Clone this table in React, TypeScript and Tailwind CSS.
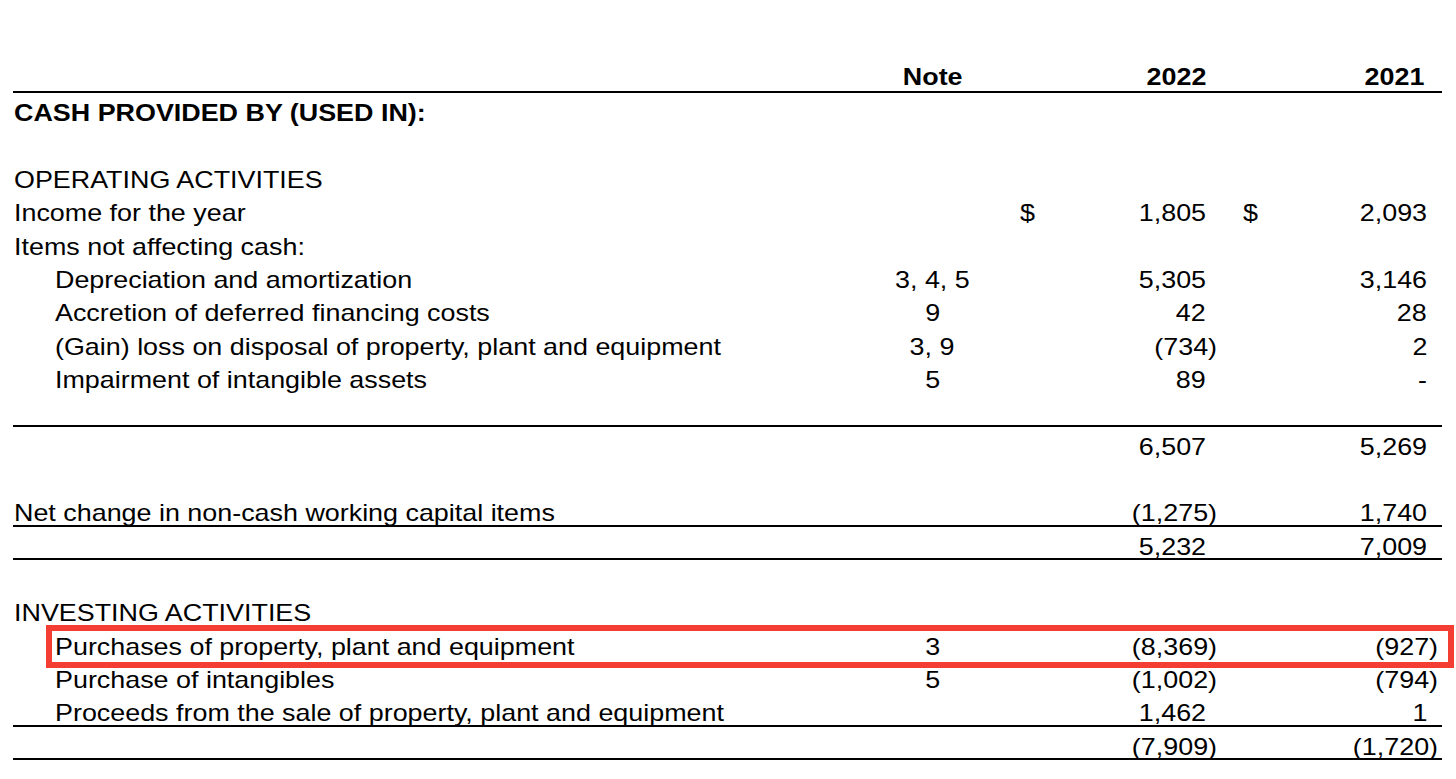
import React from 'react';

// Row model for the cash flow statement
type Row = {
    label?: string;
    indent?: boolean;
    bold?: boolean;
    note?: string;
    dollar?: boolean;
    v2022?: string;
    v2021?: string;
    line?: boolean; // rule under the row
    highlight?: boolean;
};

const rows: Row[] = [
    { label: 'CASH PROVIDED BY (USED IN):', bold: true },
    {},
    { label: 'OPERATING ACTIVITIES' },
    { label: 'Income for the year', dollar: true, v2022: '1,805', v2021: '2,093' },
    { label: 'Items not affecting cash:' },
    { label: 'Depreciation and amortization', indent: true, note: '3, 4, 5', v2022: '5,305', v2021: '3,146' },
    { label: 'Accretion of deferred financing costs', indent: true, note: '9', v2022: '42', v2021: '28' },
    { label: '(Gain) loss on disposal of property, plant and equipment', indent: true, note: '3, 9', v2022: '(734)', v2021: '2' },
    { label: 'Impairment of intangible assets', indent: true, note: '5', v2022: '89', v2021: '-' },
    { line: true },
    { v2022: '6,507', v2021: '5,269' },
    {},
    { label: 'Net change in non-cash working capital items', v2022: '(1,275)', v2021: '1,740', line: true },
    { v2022: '5,232', v2021: '7,009', line: true },
    {},
    { label: 'INVESTING ACTIVITIES' },
    { label: 'Purchases of property, plant and equipment', indent: true, note: '3', v2022: '(8,369)', v2021: '(927)', highlight: true },
    { label: 'Purchase of intangibles', indent: true, note: '5', v2022: '(1,002)', v2021: '(794)' },
    { label: 'Proceeds from the sale of property, plant and equipment', indent: true, v2022: '1,462', v2021: '1', line: true },
    { v2022: '(7,909)', v2021: '(1,720)', line: true },
];

const cols = 'grid grid-cols-[867px_105px_75px_157px_73px_148px_4px]';

// the scanned statement is a little wider than plain Arial
const L = ({ children }: { children?: React.ReactNode }) => (
    <span className="inline-block scale-x-[1.12] origin-left">{children}</span>
);
const C = ({ children }: { children?: React.ReactNode }) => (
    <span className="inline-block scale-x-[1.12] origin-center">{children}</span>
);
const R = ({ children }: { children?: React.ReactNode }) => (
    <span className="inline-block scale-x-[1.12] origin-right">{children}</span>
);

// Right-aligned amount; a closing paren hangs past the digits
const Amount = ({ value }: { value?: string }) => {
    if (!value) return <div />;
    const paren = value.endsWith(')');
    return (
        <div className={paren ? 'text-right' : 'text-right pr-[11px]'}>
            <R>{value}</R>
        </div>
    );
};

export default function App() {
    return (
        <div className="min-h-screen bg-white text-black font-['Liberation_Sans',Arial,sans-serif] text-[24px] leading-[33.33px] pt-[60px]">
            <div className="ml-[13px] w-[1429px]">
                {/* Column header */}
                <div className={`${cols} h-[33.33px] font-bold border-b-2 border-black`}>
                    <div />
                    <div className="text-center"><C>Note</C></div>
                    <div />
                    <div className="text-right pr-[11px]"><R>2022</R></div>
                    <div />
                    <div className="text-right pr-[14px]"><R>2021</R></div>
                    <div />
                </div>

                {rows.map((r, i) => (
                    <div
                        key={i}
                        className={`${cols} relative h-[33.33px] pt-[3px] whitespace-nowrap ${r.line ? 'border-b-2 border-black' : ''} ${r.bold ? 'font-bold' : ''}`}
                    >
                        <div className={r.indent ? 'pl-[42px]' : 'pl-[1px]'}>{r.label && <L>{r.label}</L>}</div>
                        <div className="text-center">{r.note && <C>{r.note}</C>}</div>
                        <div className="pl-[35px]">{r.dollar && <L>$</L>}</div>
                        <Amount value={r.v2022} />
                        <div className="pl-[26px]">{r.dollar && <L>$</L>}</div>
                        <Amount value={r.v2021} />
                        <div />
                        {r.highlight && (
                            <div className="absolute left-[33px] right-[-12px] top-[-2px] bottom-[-8px] border-[6px] border-[#f43d33] pointer-events-none" />
                        )}
                    </div>
                ))}
            </div>
        </div>
    );
}
